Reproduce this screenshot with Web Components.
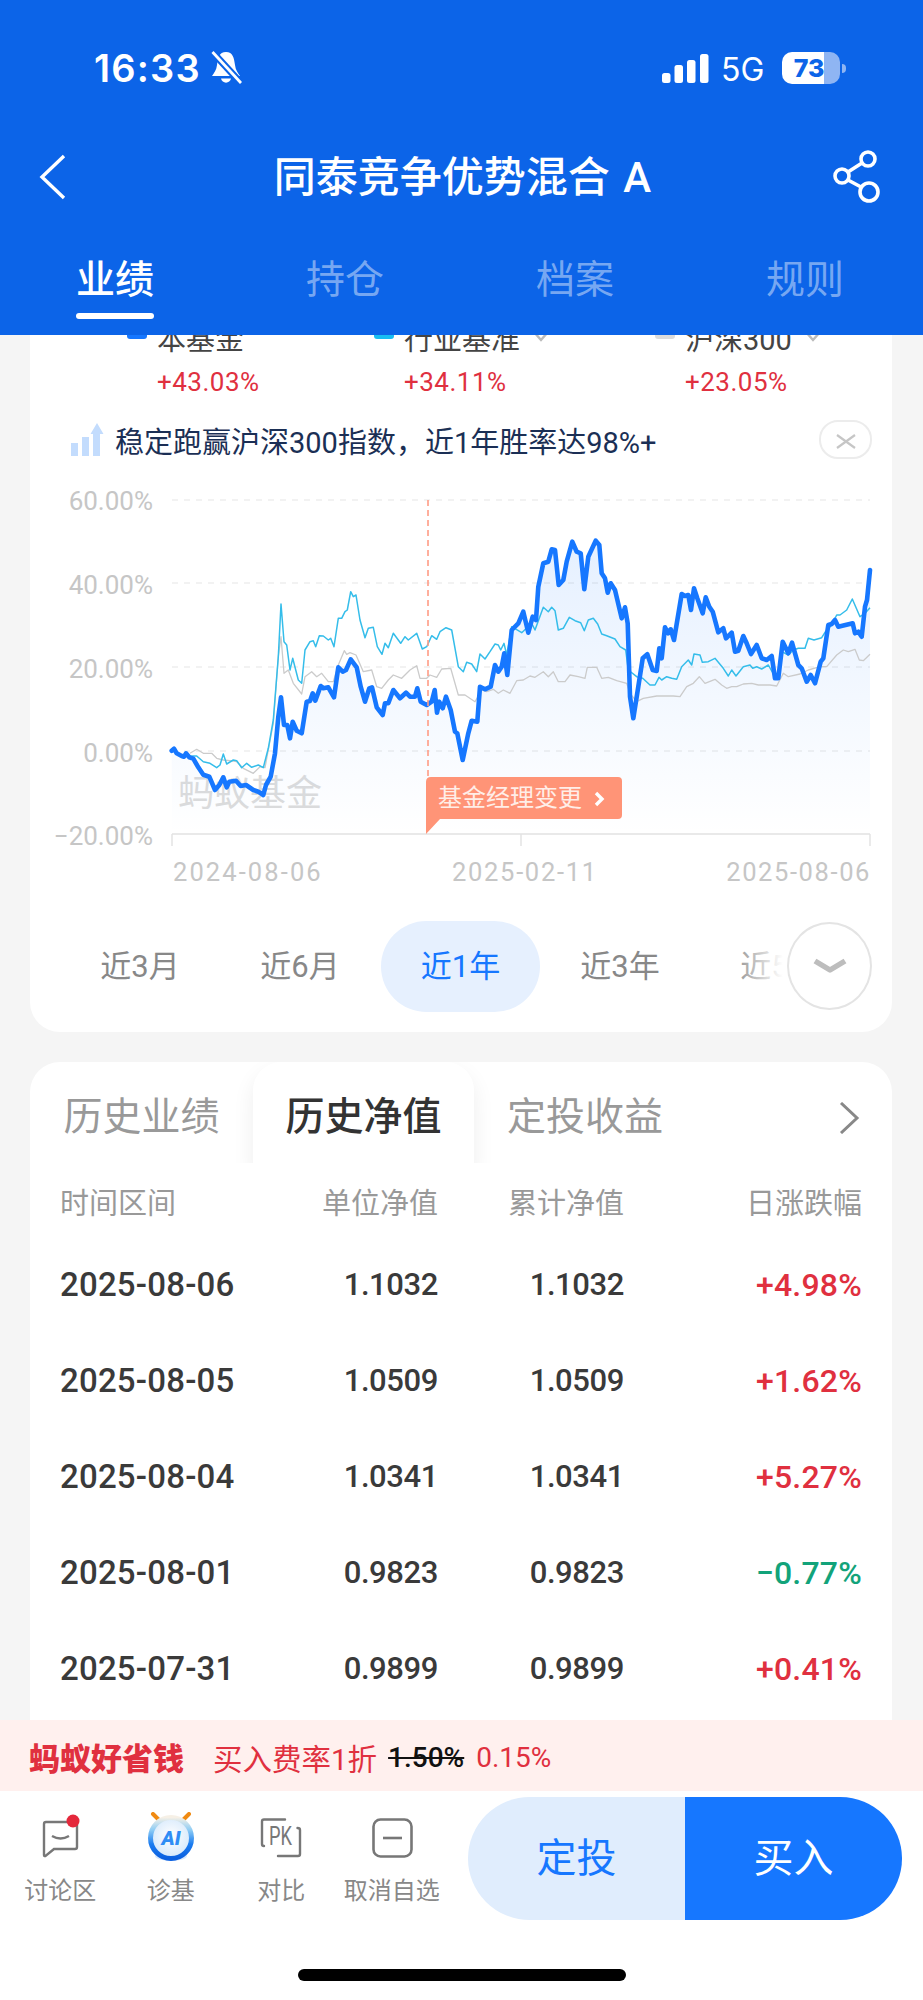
<!DOCTYPE html>
<html lang="zh">
<head>
<meta charset="utf-8">
<title>同泰竞争优势混合A</title>
<style>
  html, body { margin: 0; padding: 0; }
  body {
    width: 923px;
    height: 2000px;
    overflow: hidden;
    display: flex;
    flex-direction: column;
    background: #f5f5f5;
    font-family: Roboto, "Noto Sans CJK SC", sans-serif;
  }
</style>
</head>
<body>
<fund-header></fund-header>
<scroll-view>
  <perf-card></perf-card>
  <history-card>
    <history-row date="2025-08-06" unit="1.1032" total="1.1032" change="+4.98%" tone="up"></history-row>
    <history-row date="2025-08-05" unit="1.0509" total="1.0509" change="+1.62%" tone="up"></history-row>
    <history-row date="2025-08-04" unit="1.0341" total="1.0341" change="+5.27%" tone="up"></history-row>
    <history-row date="2025-08-01" unit="0.9823" total="0.9823" change="−0.77%" tone="down"></history-row>
    <history-row date="2025-07-31" unit="0.9899" total="0.9899" change="+0.41%" tone="up"></history-row>
  </history-card>
</scroll-view>
<promo-bar></promo-bar>
<action-bar>
  <action-item label="讨论区">
    <svg width="60" height="50" viewBox="0 0 60 50" fill="none" stroke="#777" stroke-width="2.4">
      <path d="M16 10H45Q47 10 47 12V35Q47 37 45 37H24L15.5 44Q14 44.5 14 43V12Q14 10 16 10Z"/>
      <path d="M22 24Q30.5 29 39 24"/>
      <circle cx="43" cy="9" r="6.5" fill="#e4283b" stroke="none"/>
    </svg>
  </action-item>
  <action-item label="诊基">
    <svg width="60" height="50" viewBox="0 0 60 50" fill="none">
      <defs>
        <linearGradient id="ring" x1="0" y1="0" x2="0" y2="1">
          <stop offset="0" stop-color="#f6f0e6"/>
          <stop offset=".3" stop-color="#8fcdf5"/>
          <stop offset=".65" stop-color="#1b7cf0"/>
          <stop offset="1" stop-color="#0a5fe0"/>
        </linearGradient>
        <radialGradient id="ball" cx=".5" cy=".45" r=".6">
          <stop offset="0" stop-color="#ffffff"/>
          <stop offset="1" stop-color="#cfe5fb"/>
        </radialGradient>
      </defs>
      <ellipse cx="30" cy="44" rx="16" ry="5" fill="#d6e7fd"/>
      <path d="M12 2L20 10M48 2L40 10" stroke="#f08a12" stroke-width="4" stroke-linecap="round"/>
      <circle cx="30" cy="26" r="20.5" fill="url(#ball)" stroke="url(#ring)" stroke-width="5"/>
      <text x="30" y="33" text-anchor="middle" font-family="Roboto, sans-serif" font-weight="900" font-style="italic" font-size="20" fill="#2f8df5">AI</text>
    </svg>
  </action-item>
  <action-item label="对比">
    <svg width="60" height="50" viewBox="0 0 60 50" fill="none" stroke="#777" stroke-width="2.4" stroke-linecap="round">
      <path d="M34 7.5H13Q11 7.5 11 9.5V32Q11 34 13 34"/>
      <path d="M27 44H47Q49 44 49 42V18Q49 16 46.5 16"/>
      <text x="18" y="33" font-family="Roboto, sans-serif" font-size="25" fill="#777" stroke="none" textLength="23" lengthAdjust="spacingAndGlyphs">PK</text>
    </svg>
  </action-item>
  <action-item label="取消自选">
    <svg width="60" height="50" viewBox="0 0 60 50" fill="none" stroke="#777" stroke-width="2.6">
      <rect x="11.5" y="7.5" width="38" height="37" rx="7"/>
      <path d="M21 26H40"/>
    </svg>
  </action-item>
</action-bar>

<script>
const ICON_BACK = `<svg width="30" height="46" viewBox="0 0 30 46" fill="none"><path d="M26 2L4 23L26 44" stroke="#fff" stroke-width="3.4"/></svg>`;
const ICON_SHARE = `<svg width="50" height="56" viewBox="0 0 50 56" fill="none" stroke="#fff" stroke-width="3.6"><circle cx="35" cy="10" r="7"/><circle cx="9" cy="27" r="7"/><circle cx="36" cy="43" r="9"/><path d="M29 14L15 23M15 31L28 38"/></svg>`;

class StatusBar extends HTMLElement {
  static TAG = 'status-bar';
  constructor() {
    super();
    this.attachShadow({mode: 'open'});
    this.shadowRoot.innerHTML = `
<style>
  :host { display: flex; align-items: center; height: 136px; padding: 0 77px 0 94px; color: #fff; }
  .time { font: 600 38px/1 Inter, Roboto, sans-serif; letter-spacing: 1.2px; }
  .bell { margin-left: 9px; }
  .right { margin-left: auto; display: flex; align-items: flex-end; }
  .net { margin: 0 0 -2px 12px; font: 400 32px/1 Inter, sans-serif; width: 44px; }
  .bat { margin-left: 17px; position: relative; width: 58px; height: 32px; border-radius: 10px; overflow: hidden;
    background: linear-gradient(90deg, #fff 72%, #8fb5f3 72%); display: flex; align-items: center; justify-content: center; }
  .bat span { font: 800 25px/1 Inter, sans-serif; color: #0c64e8; padding-right: 4px; }
  .nub { width: 4px; height: 9px; margin: 0 0 11px 2px; background: #8fb5f3; border-radius: 0 4px 4px 0; }
</style>
<span class="time">16:33</span>
<svg class="bell" width="32" height="34" viewBox="0 0 32 34">
  <path d="M16 1C9 1 8 7 7 14C6.500 19 4 22 2 25H30C28 22 25.500 19 25 14C24 7 23 1 16 1Z" fill="#fff"/>
  <path d="M11 27.500H21C20 33 12 33 11 27.500Z" fill="#fff"/>
  <path d="M1.500 0L31 32" stroke="#0c64e8" stroke-width="7"/>
  <path d="M2.500 1L31 32" stroke="#fff" stroke-width="2.800"/>
</svg>
<div class="right">
  <svg width="47" height="30" viewBox="0 0 47 30" fill="#fff">
    <rect x="0" y="19" width="8.500" height="10" rx="2.500"/>
    <rect x="12.500" y="11" width="8.500" height="18" rx="2.500"/>
    <rect x="25" y="6" width="8.500" height="23" rx="2.500"/>
    <rect x="38" y="0" width="8.500" height="29" rx="2.500"/>
  </svg>
  <span class="net">5G</span>
  <div class="bat"><span>73</span></div>
  <div class="nub"></div>
</div>`;
  }
}
customElements.define(StatusBar.TAG, StatusBar);

class FundHeader extends HTMLElement {
  static TAG = 'fund-header';
  constructor() {
    super();
    this.attachShadow({mode: 'open'});
    this.shadowRoot.innerHTML = `
<style>
  :host { display: block; flex: none; height: 335px; background: #0c64e8; color: #fff; position: relative; z-index: 2;
    font-family: Roboto, "Noto Sans CJK SC", sans-serif; }
  .nav { display: flex; align-items: center; height: 82px; padding: 0 40px 0 38px; }
  h1 { flex: 1; margin: 0; text-align: center; font-size: 42px; font-weight: 500; line-height: 82px; padding: 2px 0 0 24px; word-spacing: 3px; white-space: nowrap; }
  .tabs { display: grid; grid-template-columns: repeat(4, 230px); }
  .tab { display: flex; flex-direction: column; align-items: center; padding-top: 38px; font-size: 39px; line-height: 48px;
    color: rgba(255,255,255,.45); }
  .tab.on { color: #fff; font-weight: 500; }
  .tab.on::after { content: ""; width: 78px; height: 6px; margin-top: 9px; border-radius: 3px; background: #fff; }
</style>
<status-bar></status-bar>
<div class="nav">${ICON_BACK}<h1>同泰竞争优势混合 A</h1>${ICON_SHARE}</div>
<div class="tabs">
  <div class="tab on">业绩</div><div class="tab">持仓</div><div class="tab">档案</div><div class="tab">规则</div>
</div>`;
  }
}
customElements.define(FundHeader.TAG, FundHeader);

class ScrollView extends HTMLElement {
  static TAG = 'scroll-view';
  constructor() {
    super();
    this.attachShadow({mode: 'open'});
    this.shadowRoot.innerHTML = `
<style>
  :host { display: flex; flex-direction: column; gap: 30px; flex: none; height: 1385px; overflow: hidden; padding: 0 31px 0 30px; box-sizing: border-box; }
</style>
<slot></slot>`;
  }
}
customElements.define(ScrollView.TAG, ScrollView);

// traced from the reference at 3x: [px, py] in crop coordinates
const leftX = (p) => 30 + p / 3;
const rightX = (p) => 460 + p / 3;
const toY = (q) => 470 + q / 3;

const BLUE_L = [425,842,432,836,440,850,455,858,462,860,468,850,478,862,490,866,505,892,520,914,538,920,555,960,568,945,580,922,590,952,598,935,618,932,632,948,648,945,670,960,685,965,700,975,708,945,722,920,735,850,745,740,753,682,762,765,772,765,780,805,788,755,800,782,815,790,830,695,840,693,848,670,856,692,872,648,880,655,895,652,912,682,925,592,938,605,948,600,962,568,980,592,992,650,1005,695,1018,655,1026,652,1040,712,1058,735,1065,700,1075,700,1090,660,1110,685,1128,668,1140,680,1155,680,1162,655,1172,695,1190,705,1205,695,1214,660,1221,728,1228,695,1238,715,1248,680,1262,720,1275,785,1282,790];
const BLUE_R = [8,870,25,790,35,752,52,755,60,650,75,658,92,650,105,585,115,605,125,590,133,550,142,615,155,480,175,460,190,425,205,488,218,440,228,450,235,350,250,280,265,275,275,238,285,240,296,345,310,330,320,275,337,215,350,245,362,250,373,358,385,260,407,212,418,225,425,310,435,325,443,368,452,340,465,360,485,445,495,412,503,460,510,680,520,745,535,650,548,565,562,553,578,600,590,603,598,535,605,565,615,472,625,490,632,478,642,510,665,372,675,378,685,375,693,420,702,355,712,385,728,430,737,382,748,410,758,425,775,487,790,475,798,505,815,488,825,545,835,542,850,498,860,520,873,552,890,525,905,565,920,570,935,558,945,625,955,625,968,515,985,550,996,518,1015,585,1025,595,1040,635,1052,615,1065,640,1082,575,1090,565,1105,465,1115,462,1125,450,1135,470,1178,460,1185,490,1195,485,1205,500,1215,410,1221,390,1230,300];
const CYAN_L = [480,858,500,858,520,875,540,880,560,893,570,885,580,852,590,882,610,870,620,872,635,893,650,880,665,892,685,885,700,893,715,835,730,750,745,560,753,402,762,515,770,525,780,600,788,565,805,630,815,640,825,540,840,515,850,512,857,530,868,497,880,498,895,510,902,505,912,530,925,445,935,445,945,425,952,420,962,365,970,380,978,375,990,450,1005,503,1015,475,1030,472,1042,530,1056,553,1065,520,1075,533,1090,490,1112,520,1125,500,1135,510,1160,490,1177,537,1190,530,1205,497,1220,508,1230,485,1248,473,1265,480,1285,590];
const CYAN_R = [10,605,20,577,35,582,50,605,60,552,75,567,90,545,105,522,115,525,122,540,132,520,140,555,155,470,185,488,215,460,225,480,250,412,265,425,275,412,285,422,295,480,310,475,328,442,345,452,362,458,373,482,385,450,400,445,413,462,425,492,440,497,465,507,480,530,497,540,505,600,530,620,548,625,570,645,585,645,597,622,605,630,620,620,635,625,650,628,665,590,685,570,695,585,702,552,720,555,727,577,745,575,765,565,790,595,805,618,815,600,828,618,850,590,870,585,878,595,890,590,905,597,925,585,945,620,955,625,965,545,985,555,1000,540,1015,535,1035,535,1045,505,1062,510,1085,503,1095,487,1115,465,1130,435,1140,435,1160,420,1177,387,1200,440,1215,430,1230,413];
const GRAY_L = [480,850,500,838,520,850,545,850,560,865,580,870,600,872,620,875,640,895,670,910,690,890,705,893,715,840,730,760,745,560,753,500,762,610,775,600,790,640,815,672,825,620,845,605,860,620,875,610,895,635,910,635,925,585,943,542,950,553,960,548,978,555,1000,605,1025,600,1040,650,1055,655,1075,630,1090,615,1115,625,1140,600,1160,587,1170,625,1190,625,1200,615,1220,622,1235,597,1262,595,1285,675,1305,675,1335,695];
const GRAY_R = [65,660,80,665,100,658,115,670,130,660,150,670,170,632,190,630,210,618,225,622,250,605,265,620,280,605,295,635,315,635,330,615,355,620,375,625,382,592,410,592,425,625,445,622,470,632,500,640,510,670,530,695,550,685,590,678,640,678,660,680,680,650,700,640,718,620,735,640,765,628,785,645,800,655,815,650,830,650,850,642,875,640,895,645,930,645,950,648,970,610,985,620,1020,612,1045,600,1080,590,1100,590,1130,555,1150,540,1165,545,1185,538,1198,570,1210,572,1230,553];

function tracePoints(left, right) {
  const pts = [];
  for (let i = 0; i < left.length; i += 2) pts.push([leftX(left[i]), toY(left[i + 1])]);
  for (let i = 0; i < right.length; i += 2) pts.push([rightX(right[i]), toY(right[i + 1])]);
  return pts;
}
const linePath = (pts) => 'M' + pts.map(p => p[0].toFixed(1) + ' ' + p[1].toFixed(1)).join('L');

class PerfChart extends HTMLElement {
  static TAG = 'perf-chart';
  constructor() {
    super();
    this.attachShadow({mode: 'open'});
    const blue = tracePoints(BLUE_L, BLUE_R);
    const gridY = [500, 583, 667, 751];
    const labels = [['60.00%', 510], ['40.00%', 594], ['20.00%', 678], ['0.00%', 762], ['−20.00%', 845]];
    this.shadowRoot.innerHTML = `
<style>
  :host { display: block; height: 410px; margin-top: 20px; }
  svg { display: block; }
  text { font-family: Roboto, "Noto Sans CJK SC", sans-serif; }
</style>
<svg width="862" height="410" viewBox="30 480 862 410" fill="none">
  <defs>
    <linearGradient id="area" gradientUnits="userSpaceOnUse" x1="0" y1="540" x2="0" y2="834">
      <stop offset="0" stop-color="#1677ff" stop-opacity=".11"/>
      <stop offset="1" stop-color="#1677ff" stop-opacity="0"/>
    </linearGradient>
  </defs>
  ${gridY.map(y => `<path d="M172 ${y}H870" stroke="#e6e6e6" stroke-width="1.2" stroke-dasharray="6 6"/>`).join('')}
  <path d="M172 834H870M172 834V846M521 834V846M870 834V846" stroke="#e2e2e2" stroke-width="1.4"/>
  ${labels.map(l => `<text x="153" y="${l[1]}" text-anchor="end" font-size="26" fill="#c6c6c6">${l[0]}</text>`).join('')}
  <text x="178" y="806" font-size="36" fill="#dcdcdc">蚂蚁基金</text>
  <path d="${linePath(blue)}L870 834L172 834Z" fill="url(#area)"/>
  <path d="${linePath(tracePoints(GRAY_L, GRAY_R))}" stroke="#cbcbcb" stroke-width="1.3" stroke-linejoin="round"/>
  <path d="${linePath(tracePoints(CYAN_L, CYAN_R))}" stroke="#35bdea" stroke-width="1.5" stroke-linejoin="round"/>
  <path d="${linePath(blue)}" stroke="#1677ff" stroke-width="4.6" stroke-linejoin="round" stroke-linecap="round"/>
  <path d="M428 500V777" stroke="#ff9c85" stroke-width="1.6" stroke-dasharray="6 4"/>
  <path d="M426 782Q426 777 431 777H618Q622 777 622 781V815Q622 819 618 819H440L426 834Z" fill="#ff9477"/>
  <text x="438" y="806" font-size="24" fill="#ffeee8">基金经理变更</text>
  <path d="M596 793L602 799L596 805" stroke="#fff" stroke-width="3.4"/>
  <text x="173" y="881" font-size="25.500" fill="#c6c6c6" letter-spacing="2.100">2024-08-06</text>
  <text x="452" y="881" font-size="25.500" fill="#c6c6c6" letter-spacing="1.700">2025-02-11</text>
  <text x="871" y="881" font-size="25.500" fill="#c6c6c6" letter-spacing="1.600" text-anchor="end">2025-08-06</text>
</svg>`;
  }
}
customElements.define(PerfChart.TAG, PerfChart);

class LegendItem extends HTMLElement {
  static TAG = 'legend-item';
  constructor() {
    super();
    this.attachShadow({mode: 'open'});
    const caret = this.hasAttribute('caret')
      ? `<svg class="caret" width="18" height="10" viewBox="0 0 18 10" fill="none"><path d="M2 0L9 8L16 0" stroke="#bbb" stroke-width="2.400"/></svg>`
      : '';
    this.shadowRoot.innerHTML = `
<style>
  :host { display: grid; grid-template-columns: 20px auto; column-gap: 10px; row-gap: 6px; justify-content: start;
    font-family: Roboto, "Noto Sans CJK SC", sans-serif; }
  .dot { width: 20px; height: 14px; margin-top: 3px; border-radius: 3px; background: var(--dot); }
  .name { display: flex; align-items: flex-start; font-size: 29px; line-height: 36px; color: #444; white-space: nowrap; }
  .caret { margin: 10px 0 0 12px; }
  .val { grid-column: 2; font-size: 26px; line-height: 36px; color: #e0303f; letter-spacing: .5px; }
</style>
<div class="dot"></div>
<div class="name">${this.getAttribute('name')}${caret}</div>
<div class="val">${this.getAttribute('value')}</div>`;
  }
}
customElements.define(LegendItem.TAG, LegendItem);

class PeriodTabs extends HTMLElement {
  static TAG = 'period-tabs';
  constructor() {
    super();
    this.attachShadow({mode: 'open'});
    this.shadowRoot.innerHTML = `
<style>
  :host { display: grid; grid-template-columns: repeat(5, 160px); position: relative; margin-top: 31px; padding: 0 0 20px 30px; }
  div.p { height: 91px; line-height: 91px; text-align: center; font-size: 31px; color: #888; }
  .on { background: #e6f0fe; color: #1677ff !important; border-radius: 46px; margin: 0 0 0 1px; }
  .fade { position: absolute; left: 700px; top: 0; width: 62px; height: 91px; background: linear-gradient(90deg, rgba(255,255,255,0), #fff 85%); }
  .more { position: absolute; left: 757px; top: 1px; width: 85px; height: 88px; box-sizing: border-box; border: 2px solid #e4e4e4; border-radius: 50%;
    background: #fff; display: flex; align-items: center; justify-content: center; }
</style>
<div class="p">近3月</div><div class="p">近6月</div><div class="p on">近1年</div><div class="p">近3年</div><div class="p">近5年</div>
<div class="fade"></div>
<div class="more"><svg width="36" height="16" viewBox="0 0 36 16" fill="none"><path d="M3 3L18 12L33 3" stroke="#bdbdbd" stroke-width="5.500" stroke-linejoin="round"/></svg></div>`;
  }
}
customElements.define(PeriodTabs.TAG, PeriodTabs);

class PerfCard extends HTMLElement {
  static TAG = 'perf-card';
  constructor() {
    super();
    this.attachShadow({mode: 'open'});
    this.shadowRoot.innerHTML = `
<style>
  :host { display: block; flex: none; margin-top: -40px; padding-top: 27px; background: #fff; border-radius: 0 0 30px 30px;
    font-family: Roboto, "Noto Sans CJK SC", sans-serif; }
  .legend { display: grid; grid-template-columns: 247px 281px auto; padding-left: 97px; }
  .tip { display: flex; height: 40px; margin-top: 20px; padding: 0 20px 0 41px; }
  .tip svg { margin-top: 3px; }
  .tip span { margin: 3px 0 0 11px; font-size: 29px; line-height: 40px; color: #1b2f55; white-space: nowrap; }
  .close { margin-left: auto; width: 53px; height: 39px; box-sizing: border-box; border: 2px solid #ececec; border-radius: 19px;
    display: flex; align-items: center; justify-content: center; }
</style>
<div class="legend">
  <legend-item name="本基金" value="+43.03%" style="--dot:#1677ff"></legend-item>
  <legend-item name="行业基准" value="+34.11%" caret style="--dot:#17bdf2"></legend-item>
  <legend-item name="沪深300" value="+23.05%" caret style="--dot:#dcdcdc"></legend-item>
</div>
<div class="tip">
  <svg width="33" height="34" viewBox="0 0 33 34" fill="#c3dcfd">
    <rect x="0" y="20" width="7" height="13"/><rect x="11" y="14" width="7" height="19"/>
    <path d="M22 33V11H19.500L26 0L32.500 11H29V33Z"/>
  </svg>
  <span>稳定跑赢沪深300指数，近1年胜率达98%+</span>
  <div class="close"><svg width="20" height="15" viewBox="0 0 20 15" fill="none"><path d="M1 1L19 14M19 1L1 14" stroke="#c6c6c6" stroke-width="2.200"/></svg></div>
</div>
<perf-chart></perf-chart>
<period-tabs></period-tabs>`;
  }
}
customElements.define(PerfCard.TAG, PerfCard);

class HistoryRow extends HTMLElement {
  static TAG = 'history-row';
  constructor() {
    super();
    this.attachShadow({mode: 'open'});
    const tone = this.getAttribute('tone') === 'down' ? '#12a37a' : '#e0303f';
    this.shadowRoot.innerHTML = `
<style>
  :host { display: grid; grid-template-columns: 200px 178px 186px 238px; align-items: center; height: 96px; padding-left: 30px;
    font: 500 31px/40px Roboto, sans-serif; color: #3a3a3a; }
  .d { font-size: 33px; letter-spacing: .2px; white-space: nowrap; }
  .n { text-align: right; letter-spacing: -.4px; }
  .c { text-align: right; font-size: 32px; letter-spacing: .2px; }
</style>
<span class="d">${this.getAttribute('date')}</span>
<span class="n">${this.getAttribute('unit')}</span>
<span class="n">${this.getAttribute('total')}</span>
<span class="c" style="color:${tone}">${this.getAttribute('change')}</span>`;
  }
}
customElements.define(HistoryRow.TAG, HistoryRow);

class HistoryCard extends HTMLElement {
  static TAG = 'history-card';
  constructor() {
    super();
    this.attachShadow({mode: 'open'});
    this.shadowRoot.innerHTML = `
<style>
  :host { display: block; flex: none; padding-bottom: 40px; background: #fff; border-radius: 30px 30px 0 0;
    font-family: Roboto, "Noto Sans CJK SC", sans-serif; }
  .tabs { display: grid; grid-template-columns: 223px 221px 222px auto; height: 101px; overflow: hidden; }
  .t { text-align: center; font-size: 39px; line-height: 110px; color: #999; }
  .t.on { position: relative; color: #333; font-weight: 500; background: #fff; border-radius: 28px 28px 0 0;
    box-shadow: 0 10px 22px rgba(0,0,0,.07); }
  .go { display: flex; align-items: center; padding: 1px 0 0 142px; }
  .head { display: grid; grid-template-columns: 200px 178px 186px 238px; margin-top: 21px; padding-left: 30px;
    font-size: 29px; line-height: 40px; color: #999; }
  .head span + span { text-align: right; }
  .rows { display: block; margin-top: 13px; }
</style>
<div class="tabs">
  <div class="t">历史业绩</div><div class="t on">历史净值</div><div class="t">定投收益</div>
  <div class="go"><svg width="22" height="32" viewBox="0 0 22 32" fill="none"><path d="M3 1L19 16L3 31" stroke="#888" stroke-width="3"/></svg></div>
</div>
<div class="head"><span>时间区间</span><span>单位净值</span><span>累计净值</span><span>日涨跌幅</span></div>
<div class="rows"><slot></slot></div>`;
  }
}
customElements.define(HistoryCard.TAG, HistoryCard);

class PromoBar extends HTMLElement {
  static TAG = 'promo-bar';
  constructor() {
    super();
    this.attachShadow({mode: 'open'});
    this.shadowRoot.innerHTML = `
<style>
  :host { display: flex; align-items: center; flex: none; height: 71px; padding: 3px 0 0 29px; box-sizing: border-box; background: #fff0ee; color: #e0303f; position: relative;
    font-family: Roboto, "Noto Sans CJK SC", sans-serif; white-space: nowrap; }
  b { font-size: 31px; font-weight: 900; margin-top: -2px; }
  .a { margin-left: 29px; font-size: 29.500px; }
  s { margin-left: 11px; font-size: 28px; font-weight: 500; color: #111; }
  .c { margin-left: 12px; font-size: 28px; }
</style>
<b>蚂蚁好省钱</b><span class="a">买入费率1折</span><s>1.50%</s><span class="c">0.15%</span>`;
  }
}
customElements.define(PromoBar.TAG, PromoBar);

class ActionItem extends HTMLElement {
  static TAG = 'action-item';
  constructor() {
    super();
    this.attachShadow({mode: 'open'});
    this.shadowRoot.innerHTML = `
<style>
  :host { display: flex; flex-direction: column; align-items: center; width: 110.500px; margin-top: 15px;
    font-family: Roboto, "Noto Sans CJK SC", sans-serif; }
  .icon { height: 50px; }
  .label { margin-top: 13px; font-size: 24px; line-height: 32px; color: #888; white-space: nowrap; }
</style>
<div class="icon"><slot></slot></div>
<div class="label">${this.getAttribute('label')}</div>`;
  }
}
customElements.define(ActionItem.TAG, ActionItem);

class ActionBar extends HTMLElement {
  static TAG = 'action-bar';
  constructor() {
    super();
    this.attachShadow({mode: 'open'});
    this.shadowRoot.innerHTML = `
<style>
  :host { display: block; flex: 1; background: #fff; font-family: Roboto, "Noto Sans CJK SC", sans-serif; }
  .row { display: flex; align-items: flex-start; padding: 6px 21px 0 5px; }
  .btns { display: grid; grid-template-columns: 217px 217px; margin-left: auto; height: 123px; border-radius: 62px; overflow: hidden; }
  .btns div { text-align: center; font-size: 40px; line-height: 123px; }
  .fix { background: #e0edfd; color: #1677ff; }
  .buy { background: #1677ff; color: #fff; }
  .home { width: 328px; height: 12px; margin: 49px auto 0; border-radius: 6px; background: #000; }
</style>
<div class="row">
  <slot></slot>
  <div class="btns"><div class="fix">定投</div><div class="buy">买入</div></div>
</div>
<div class="home"></div>`;
  }
}
customElements.define(ActionBar.TAG, ActionBar);
</script>
</body>
</html>
